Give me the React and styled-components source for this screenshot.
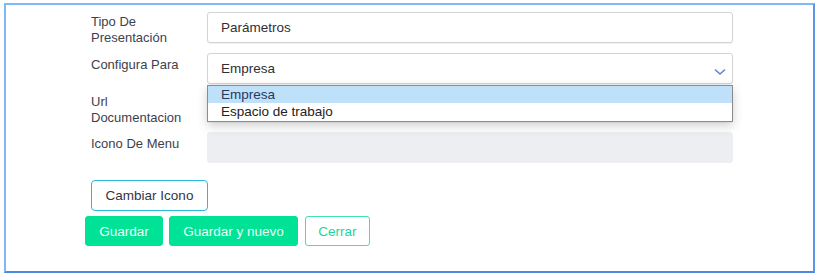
import React from "react";
import styled, { createGlobalStyle } from "styled-components";

const Global = createGlobalStyle`
  html, body { margin: 0; padding: 0; background: #fff; }
  body { font-family: "Liberation Sans", Arial, sans-serif; }
  * { box-sizing: border-box; }
`;

const Page = styled.div`
  padding: 3px 3px 3px 4px;
  width: 818px;
  height: 276px;
`;

const Frame = styled.div`
  position: relative;
  width: 811px;
  height: 270px;
  border: 2px solid #7db8f7;
  border-bottom-color: #4d89e4;
  border-right-color: #5b95ea;
  background: #fff;
  padding: 7px 0 0 79px;
`;

const Form = styled.div`
  display: flex;
  flex-direction: column;
  padding-left: 6px;
  width: 654px;
`;

const Row = styled.div`
  position: relative;
  display: grid;
  grid-template-columns: 116px 526px;
  align-items: start;
  margin-bottom: ${(p) => p.$mb}px;
`;

const Label = styled.div`
  padding-top: ${(p) => p.$pt}px;
  font-size: 13px;
  line-height: 16px;
  color: #3e3f4c;
`;

const Field = styled.div`
  position: relative;
  height: 31px;
  display: flex;
  align-items: center;
  padding: 0 13px;
  border: 1px solid ${(p) => (p.$disabled ? "#eceef1" : "#d3d3d3")};
  border-radius: 3px;
  background: ${(p) => (p.$disabled ? "#eceef1" : "#fff")};
  font-size: 13.5px;
  color: #2f2f33;
  box-shadow: ${(p) => (p.$disabled ? "none" : "0 1px 1px rgba(0,0,0,0.06)")};
`;

const Chevron = styled.svg`
  position: absolute;
  right: 6px;
  top: 14px;
`;

const Dropdown = styled.div`
  position: absolute;
  left: 116px;
  top: 32px;
  width: 526px;
  border: 1px solid #8c8c8c;
  background: #fff;
  padding-bottom: 1px;
  box-shadow: 0 4px 10px rgba(0, 0, 0, 0.18);
  z-index: 5;
`;

const Option = styled.div`
  height: 17px;
  line-height: 17px;
  padding-left: 13px;
  font-size: 13.5px;
  background: ${(p) => (p.$active ? "#bee0f8" : "#fff")};
  color: ${(p) => (p.$active ? "#26385e" : "#222")};
`;

const IconButton = styled.button`
  margin-top: 17px;
  margin-left: 6px;
  width: 117px;
  height: 31px;
  border: 1px solid #27b9de;
  border-radius: 4px;
  background: #fff;
  font-family: "Liberation Sans", Arial, sans-serif;
  font-size: 13.5px;
  color: #35353f;
  padding: 0;
  display: block;
`;

const Actions = styled.div`
  display: flex;
  gap: 6px;
  margin-top: 5px;
`;

const Btn = styled.button`
  height: 30px;
  width: ${(p) => p.$w}px;
  border-radius: 3px;
  font-family: "Liberation Sans", Arial, sans-serif;
  font-size: 13.5px;
  padding: 0;
  border: 1px solid ${(p) => (p.$outline ? "#40e3ac" : "#00e396")};
  background: ${(p) => (p.$outline ? "#fff" : "#00e396")};
  color: ${(p) => (p.$outline ? "#1fd597" : "#e6fff5")};
  margin-left: ${(p) => p.$ml || 0}px;
`;

export default function App() {
  return (
    <>
      <Global />
      <Page>
        <Frame>
          <Form>
            <Row $mb={7}>
              <Label $pt={2}>Tipo De<br />Presentación</Label>
              <Field>Parámetros</Field>
            </Row>
            <Row $mb={7}>
              <Label $pt={4}>Configura Para</Label>
              <Field>
                Empresa
                <Chevron width="12" height="8" viewBox="0 0 12 8">
                  <path d="M1.5 2 L6 6 L10.5 2" fill="none" stroke="#5f82d8" strokeWidth="1.6" strokeLinecap="round" strokeLinejoin="round" />
                </Chevron>
              </Field>
              <Dropdown>
                <Option $active>Empresa</Option>
                <Option>Espacio de trabajo</Option>
              </Dropdown>
            </Row>
            <Row $mb={6}>
              <Label $pt={3}>Url<br />Documentacion</Label>
              <Field />
            </Row>
            <Row $mb={0}>
              <Label $pt={4}>Icono De Menu</Label>
              <Field $disabled />
            </Row>
          </Form>
          <IconButton>Cambiar Icono</IconButton>
          <Actions>
            <Btn $w={78}>Guardar</Btn>
            <Btn $w={129}>Guardar y nuevo</Btn>
            <Btn $w={65} $outline $ml={1}>Cerrar</Btn>
          </Actions>
        </Frame>
      </Page>
    </>
  );
}
